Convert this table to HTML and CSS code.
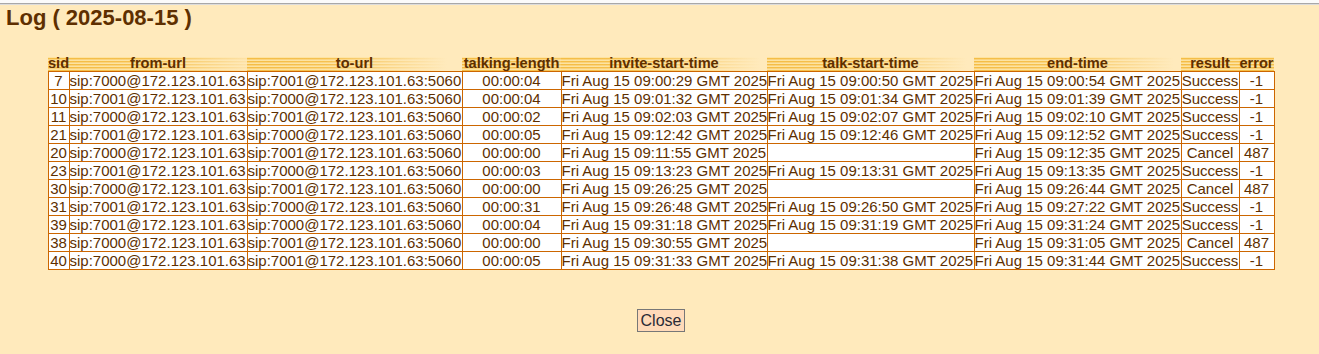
FILE: index.html
```html
<!DOCTYPE html>
<html>
<head>
<meta charset="utf-8">
<title>Log</title>
<link rel="stylesheet" href="styles.css">
</head>
<body>
<div class="frame-top"></div>
<h1 class="title">Log ( 2025-08-15 )</h1>
<div class="content">
<table class="log">
<colgroup>
<col class="c-sid"><col class="c-from"><col class="c-to"><col class="c-len"><col class="c-time"><col class="c-time2"><col class="c-time2"><col class="c-res"><col class="c-err">
</colgroup>
<thead>
<tr><th>sid</th><th>from-url</th><th>to-url</th><th>talking-length</th><th>invite-start-time</th><th>talk-start-time</th><th>end-time</th><th>result</th><th>error</th></tr>
</thead>
<tbody>
<tr><td class="ctr">7</td><td>sip:7000@172.123.101.63</td><td>sip:7001@172.123.101.63:5060</td><td class="ctr">00:00:04</td><td>Fri Aug 15 09:00:29 GMT 2025</td><td>Fri Aug 15 09:00:50 GMT 2025</td><td>Fri Aug 15 09:00:54 GMT 2025</td><td class="ctr">Success</td><td class="ctr">-1</td></tr>
<tr><td class="ctr">10</td><td>sip:7001@172.123.101.63</td><td>sip:7000@172.123.101.63:5060</td><td class="ctr">00:00:04</td><td>Fri Aug 15 09:01:32 GMT 2025</td><td>Fri Aug 15 09:01:34 GMT 2025</td><td>Fri Aug 15 09:01:39 GMT 2025</td><td class="ctr">Success</td><td class="ctr">-1</td></tr>
<tr><td class="ctr">11</td><td>sip:7000@172.123.101.63</td><td>sip:7001@172.123.101.63:5060</td><td class="ctr">00:00:02</td><td>Fri Aug 15 09:02:03 GMT 2025</td><td>Fri Aug 15 09:02:07 GMT 2025</td><td>Fri Aug 15 09:02:10 GMT 2025</td><td class="ctr">Success</td><td class="ctr">-1</td></tr>
<tr><td class="ctr">21</td><td>sip:7001@172.123.101.63</td><td>sip:7000@172.123.101.63:5060</td><td class="ctr">00:00:05</td><td>Fri Aug 15 09:12:42 GMT 2025</td><td>Fri Aug 15 09:12:46 GMT 2025</td><td>Fri Aug 15 09:12:52 GMT 2025</td><td class="ctr">Success</td><td class="ctr">-1</td></tr>
<tr><td class="ctr">20</td><td>sip:7000@172.123.101.63</td><td>sip:7001@172.123.101.63:5060</td><td class="ctr">00:00:00</td><td>Fri Aug 15 09:11:55 GMT 2025</td><td></td><td>Fri Aug 15 09:12:35 GMT 2025</td><td class="ctr">Cancel</td><td class="ctr">487</td></tr>
<tr><td class="ctr">23</td><td>sip:7001@172.123.101.63</td><td>sip:7000@172.123.101.63:5060</td><td class="ctr">00:00:03</td><td>Fri Aug 15 09:13:23 GMT 2025</td><td>Fri Aug 15 09:13:31 GMT 2025</td><td>Fri Aug 15 09:13:35 GMT 2025</td><td class="ctr">Success</td><td class="ctr">-1</td></tr>
<tr><td class="ctr">30</td><td>sip:7000@172.123.101.63</td><td>sip:7001@172.123.101.63:5060</td><td class="ctr">00:00:00</td><td>Fri Aug 15 09:26:25 GMT 2025</td><td></td><td>Fri Aug 15 09:26:44 GMT 2025</td><td class="ctr">Cancel</td><td class="ctr">487</td></tr>
<tr><td class="ctr">31</td><td>sip:7001@172.123.101.63</td><td>sip:7000@172.123.101.63:5060</td><td class="ctr">00:00:31</td><td>Fri Aug 15 09:26:48 GMT 2025</td><td>Fri Aug 15 09:26:50 GMT 2025</td><td>Fri Aug 15 09:27:22 GMT 2025</td><td class="ctr">Success</td><td class="ctr">-1</td></tr>
<tr><td class="ctr">39</td><td>sip:7001@172.123.101.63</td><td>sip:7000@172.123.101.63:5060</td><td class="ctr">00:00:04</td><td>Fri Aug 15 09:31:18 GMT 2025</td><td>Fri Aug 15 09:31:19 GMT 2025</td><td>Fri Aug 15 09:31:24 GMT 2025</td><td class="ctr">Success</td><td class="ctr">-1</td></tr>
<tr><td class="ctr">38</td><td>sip:7000@172.123.101.63</td><td>sip:7001@172.123.101.63:5060</td><td class="ctr">00:00:00</td><td>Fri Aug 15 09:30:55 GMT 2025</td><td></td><td>Fri Aug 15 09:31:05 GMT 2025</td><td class="ctr">Cancel</td><td class="ctr">487</td></tr>
<tr><td class="ctr">40</td><td>sip:7000@172.123.101.63</td><td>sip:7001@172.123.101.63:5060</td><td class="ctr">00:00:05</td><td>Fri Aug 15 09:31:33 GMT 2025</td><td>Fri Aug 15 09:31:38 GMT 2025</td><td>Fri Aug 15 09:31:44 GMT 2025</td><td class="ctr">Success</td><td class="ctr">-1</td></tr>
</tbody>
</table>
<div class="actions"><button class="btn-close" type="button">Close</button></div>
</div>
</body>
</html>
```

FILE: styles.css
```css
html, body {
  margin: 0;
  padding: 0;
  background: #ffeabc;
  font-family: "Liberation Sans", Arial, sans-serif;
  color: #5e2f00;
}
.frame-top {
  height: 3px;
  background: #fbfbfb;
  border-bottom: 1px solid #a8a8a8;
  box-shadow: 0 1px 0 #dcdcdc;
}
.title {
  margin: 0;
  padding: 1px 0 0 6px;
  font-size: 22px;
  font-weight: bold;
  line-height: 25px;
  color: #5e2f00;
}
.content {
  padding: 25px 0 0 3px;
}
.log {
  margin: 0 auto;
  border-collapse: collapse;
  table-layout: fixed;
  width: 1227px;
  font-size: 15px;
  color: #5e2f00;
}
.c-sid { width: 21px; }
.c-from { width: 178px; }
.c-to { width: 215px; }
.c-len { width: 99px; }
.c-time { width: 206px; }
.c-time2 { width: 207px; }
.c-res { width: 58px; }
.c-err { width: 35px; }
.log th {
  padding: 0;
  height: 16px;
  line-height: 16px;
  font-size: 14.6px;
  font-weight: bold;
  white-space: nowrap;
  overflow: visible;
  text-align: center;
  color: #5e2f00;
  background-color: #ffeabc;
  background-image:
    linear-gradient(to right, rgba(255,234,188,0) 0, rgba(255,234,188,0.1) 80px, rgba(255,234,188,0.8) 175px, #ffeabc 200px),
    repeating-linear-gradient(to bottom, #fde3a0 0, #fde3a0 1px, #f5bd45 1px, #f5bd45 2px, #fad27a 2px, #fad27a 3px);
  background-size: 200px 100%, 200px 14px;
  background-position: 0 0, 0 2px;
  background-repeat: no-repeat;
}
.log td {
  padding: 0;
  height: 17px;
  line-height: 17px;
  border: 1px solid #cc6600;
  background: #ffffff;
  white-space: nowrap;
  overflow: hidden;
}
.log td.ctr { text-align: center; }
.actions {
  display: flex;
  justify-content: center;
  padding-top: 39px;
}
.btn-close {
  width: 48px;
  height: 23px;
  padding: 0;
  margin: 0;
  background: #ffdab9;
  border: 1px solid #777777;
  border-radius: 0;
  font-family: "Liberation Sans", Arial, sans-serif;
  font-size: 16px;
  color: #2a2a36;
}
```
